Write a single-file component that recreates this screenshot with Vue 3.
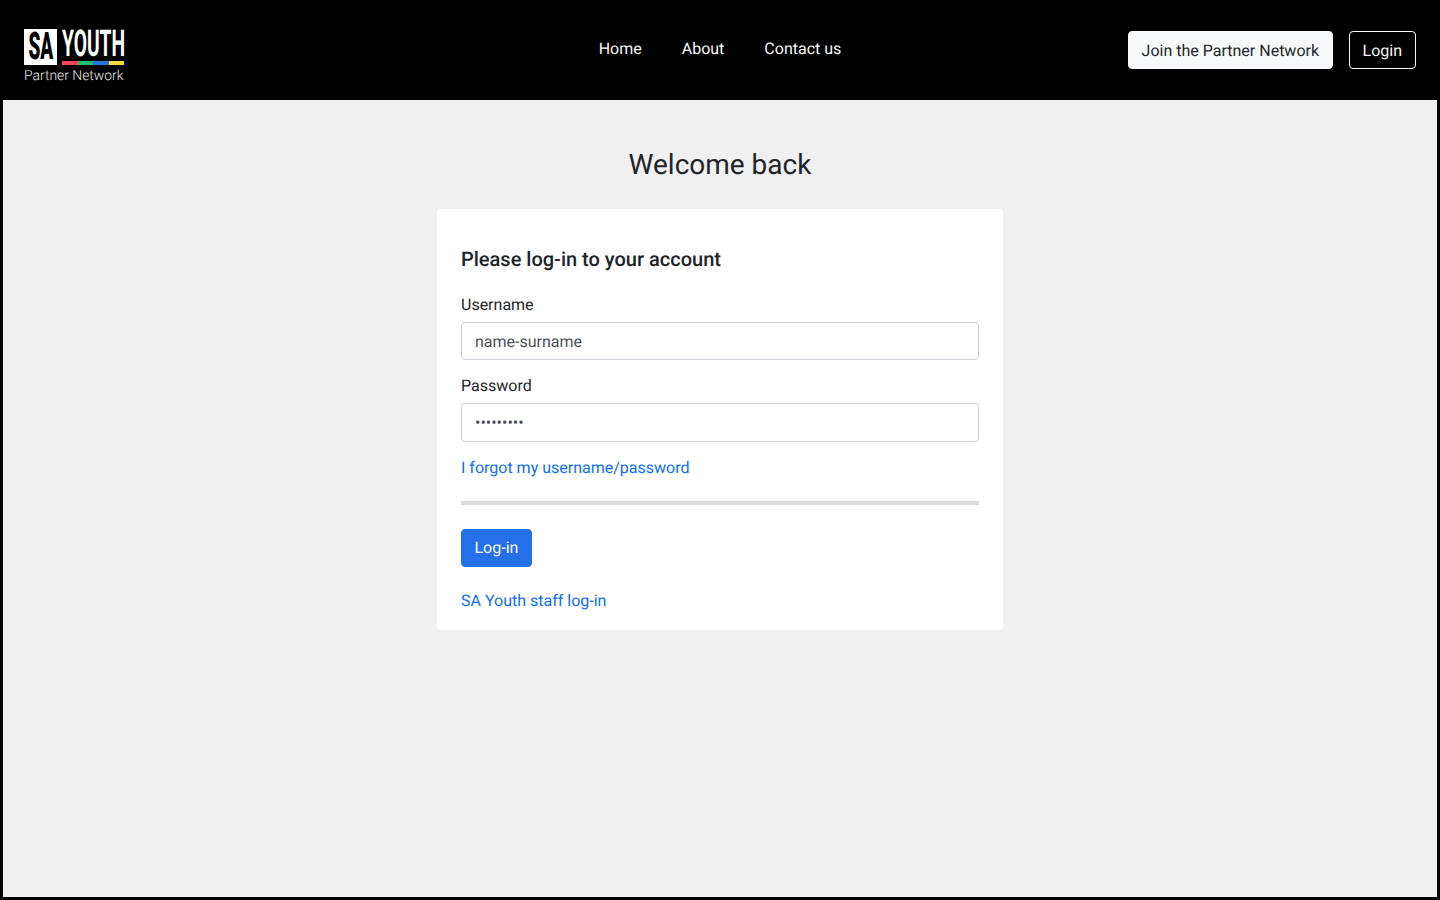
<script setup>
const navLinks = ['Home', 'About', 'Contact us']
const logoBars = ['#f4455a', '#1dbf6b', '#2477e0', '#fbd93c']
</script>

<template>
  <div class="page">
    <header class="topbar">
      <a class="logo" href="#" aria-label="SA Youth Partner Network">
        <div class="logo-top">
          <div class="logo-sa"><span>SA</span></div>
          <div class="logo-right">
            <div class="logo-youth"><span>YOUTH</span></div>
            <div class="logo-bars">
              <i v-for="bar in logoBars" :key="bar" :style="{ background: bar }"></i>
            </div>
          </div>
        </div>
        <div class="logo-sub">Partner Network</div>
      </a>
      <nav class="nav">
        <a v-for="link in navLinks" :key="link" href="#">{{ link }}</a>
      </nav>
      <div class="actions">
        <button class="btn btn-light" type="button">Join the Partner Network</button>
        <button class="btn btn-outline" type="button">Login</button>
      </div>
    </header>

    <main class="main">
      <h1>Welcome back</h1>
      <section class="card">
        <h2>Please log-in to your account</h2>
        <label for="username">Username</label>
        <input id="username" type="text" value="name-surname" readonly />
        <label for="password">Password</label>
        <input id="password" type="password" value="123456789" readonly />
        <a class="link forgot" href="#">I forgot my username/password</a>
        <hr />
        <button class="btn btn-primary" type="button">Log-in</button>
        <a class="link staff" href="#">SA Youth staff log-in</a>
      </section>
    </main>
  </div>
</template>

<style>
body { margin: 0; background: #000; }
</style>

<style scoped>
.page {
  width: 1440px;
  height: 900px;
  display: flex;
  flex-direction: column;
  background: #000;
  font-family: Roboto, "Liberation Sans", sans-serif;
  font-size: 16px;
  line-height: 24px;
  color: #212529;
  overflow: hidden;
  text-rendering: geometricPrecision;
}
.topbar {
  height: 100px;
  flex: none;
  display: grid;
  grid-template-columns: 1fr auto 1fr;
  align-items: center;
  padding: 0 24px;
  box-sizing: border-box;
}
.logo {
  display: flex;
  flex-direction: column;
  width: 102px;
  height: 55px;
  margin-top: 13px;
  text-decoration: none;
}
.logo-top { display: flex; flex: none; gap: 5px; height: 36px; }
.logo-sa {
  width: 33px;
  height: 36px;
  flex: none;
  background: #fff;
  color: #000;
  display: flex;
  justify-content: center;
  font-size: 38px;
  font-weight: 900;
  line-height: 36px;
}
.logo-sa span { flex: none; transform: scaleX(.5); }
.logo-right {
  width: 62.4px;
  display: flex;
  flex-direction: column;
  justify-content: space-between;
}
.logo-youth {
  height: 28px;
  color: #fff;
  font-size: 37px;
  font-weight: 700;
  line-height: 32px;
}
.logo-youth span { display: inline-block; transform: scaleX(.52); transform-origin: 0 50%; }
.logo-bars { display: flex; height: 4px; }
.logo-bars i { flex: 1; }
.logo-sub {
  margin-top: 4px;
  color: #e8e8e8;
  font-size: 13.9px;
  font-weight: 300;
  line-height: 15px;
  white-space: nowrap;
}
.nav {
  display: flex;
  gap: 40px;
  margin-top: -2px;
}
.nav a { color: #f8f9fa; text-decoration: none; }
.actions {
  display: flex;
  justify-content: flex-end;
  gap: 16px;
}
.btn {
  height: 38px;
  padding: 6px 12.5px;
  box-sizing: border-box;
  border: 1px solid transparent;
  border-radius: 4px;
  font: 400 16px/24px Roboto, sans-serif;
  text-rendering: geometricPrecision;
}
.actions .btn { padding-top: 7px; padding-bottom: 5px; }
.actions .btn-outline { padding-left: 13px; padding-right: 13px; }
.btn-light { background: #f8f9fa; border-color: #f8f9fa; color: #212529; }
.btn-outline { background: #000; border-color: #f8f9fa; color: #f8f9fa; }
.btn-primary { background: #2470e8; border-color: #2470e8; color: #fff; align-self: flex-start; }
.main {
  flex: 1;
  margin: 0 3px 3px;
  background: #f0f0f0;
  display: flex;
  flex-direction: column;
  align-items: center;
  padding-top: 48px;
}
h1 {
  margin: 0 0 28px;
  font-size: 28px;
  line-height: 33px;
  font-weight: 400;
}
.card {
  width: 566px;
  height: 421px;
  box-sizing: border-box;
  padding: 38px 24px 0;
  background: #fff;
  border-radius: 4px;
  display: flex;
  flex-direction: column;
}
h2 {
  margin: 0 0 22px;
  font-size: 20px;
  line-height: 24px;
  font-weight: 500;
}
label { display: block; height: 24px; margin-bottom: 5px; }
input {
  display: block;
  width: 100%;
  height: 38px;
  box-sizing: border-box;
  margin-bottom: 14px;
  padding: 6px 13px;
  border: 1px solid #ced4da;
  border-radius: 4px;
  font: 400 16px/24px Roboto, sans-serif;
  color: #495057;
  background: #fff;
  outline: none;
  text-rendering: geometricPrecision;
}
#password { height: 39px; margin-bottom: 13px; }
.link { color: #0d6efd; text-decoration: none; }
.forgot { margin-top: 1px; }
hr {
  width: 100%;
  height: 4px;
  margin: 21px 0 24px;
  border: 0;
  background: #ddd;
}
.staff { margin-top: 22px; }
</style>
